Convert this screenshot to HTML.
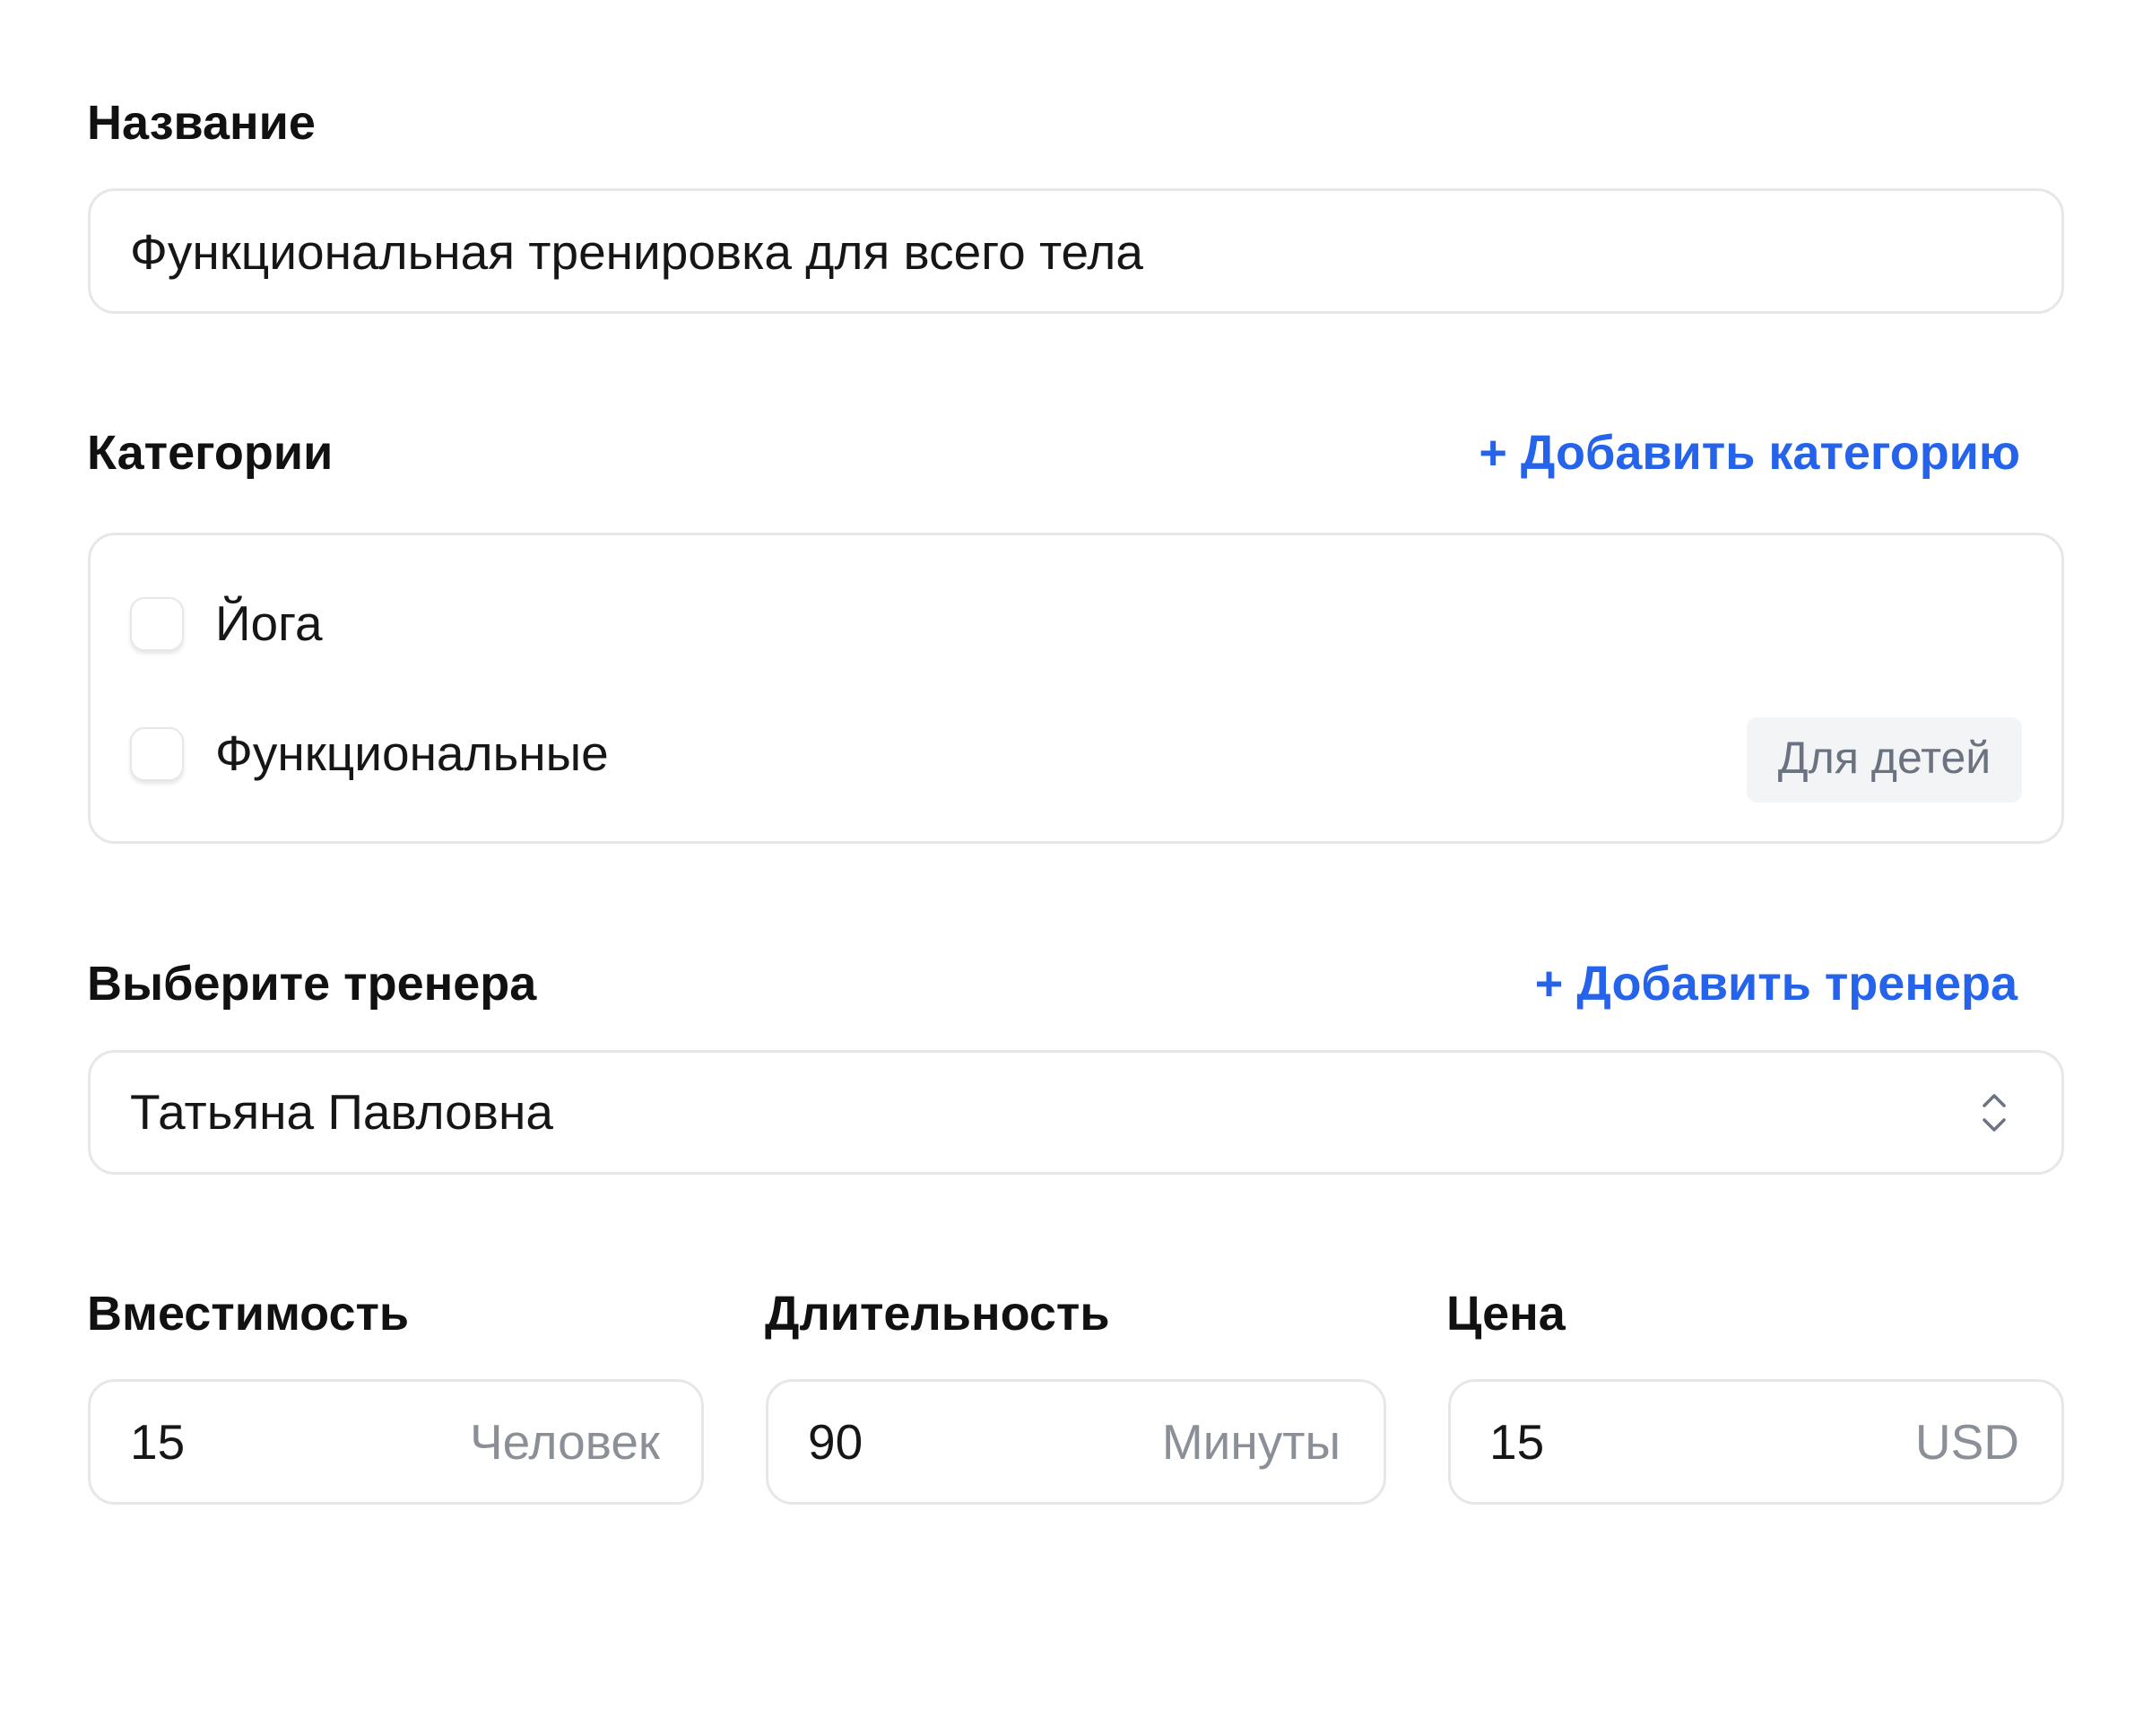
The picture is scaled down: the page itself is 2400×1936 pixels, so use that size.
<!DOCTYPE html>
<html><head><meta charset="utf-8"><style>
html,body{margin:0;padding:0;background:#fff;width:2400px;height:1936px;overflow:hidden;font-family:"Liberation Sans","DejaVu Sans",sans-serif;color:#111}
.a{position:absolute}
.lbl{font-weight:bold;font-size:54px;color:#111;line-height:1}
.link{font-weight:bold;font-size:54px;color:#2563eb;line-height:1}
.box{border:3px solid #e5e7eb;border-radius:30px;box-sizing:border-box;background:#fff}
.txt{font-size:55px;line-height:1;color:#161616}
.suf{font-size:55px;line-height:1;color:#8b8f97}
.cb{width:60px;height:60px;border:2px solid #e5e7eb;border-radius:16px;box-sizing:border-box;background:#fff;box-shadow:0 3px 5px rgba(0,0,0,0.10)}
</style></head><body>
<div class="a lbl" style="left:97px;top:110px">Название</div>
<div class="a box" style="left:98px;top:210px;width:2204px;height:140px"></div>
<div class="a txt" style="left:145px;top:254px">Функциональная тренировка для всего тела</div>

<div class="a lbl" style="left:97px;top:478px">Категории</div>
<div class="a link" style="right:147px;top:478px">+ Добавить категорию</div>
<div class="a box" style="left:98px;top:594px;width:2204px;height:347px"></div>
<div class="a cb" style="left:145px;top:666px"></div>
<div class="a txt" style="left:240px;top:668px">Йога</div>
<div class="a cb" style="left:145px;top:811px"></div>
<div class="a txt" style="left:240px;top:813px">Функциональные</div>
<div class="a" style="left:1948px;top:800px;width:307px;height:95px;background:#f3f4f6;border-radius:12px"></div>
<div class="a" style="left:1948px;top:820px;width:307px;text-align:center;font-size:50px;line-height:1;color:#6b7280">Для детей</div>

<div class="a lbl" style="left:97px;top:1070px">Выберите тренера</div>
<div class="a link" style="right:150px;top:1070px">+ Добавить тренера</div>
<div class="a box" style="left:98px;top:1171px;width:2204px;height:139px"></div>
<div class="a txt" style="left:145px;top:1213px">Татьяна Павловна</div>
<svg class="a" style="left:2208px;top:1218px" width="32" height="46" viewBox="0 0 32 46"><path d="M5 15 L16 4 L27 15 M5 31 L16 42 L27 31" fill="none" stroke="#6b7280" stroke-width="3.5" stroke-linecap="round" stroke-linejoin="round"/></svg>

<div class="a lbl" style="left:97px;top:1438px">Вместимость</div>
<div class="a lbl" style="left:853px;top:1438px">Длительность</div>
<div class="a lbl" style="left:1613px;top:1438px">Цена</div>
<div class="a box" style="left:98px;top:1538px;width:687px;height:140px"></div>
<div class="a box" style="left:854px;top:1538px;width:692px;height:140px"></div>
<div class="a box" style="left:1615px;top:1538px;width:687px;height:140px"></div>
<div class="a txt" style="left:145px;top:1581px">15</div>
<div class="a suf" style="right:1664px;top:1581px">Человек</div>
<div class="a txt" style="left:901px;top:1581px">90</div>
<div class="a suf" style="right:905px;top:1581px">Минуты</div>
<div class="a txt" style="left:1661px;top:1581px">15</div>
<div class="a suf" style="right:148px;top:1581px">USD</div>
</body></html>
